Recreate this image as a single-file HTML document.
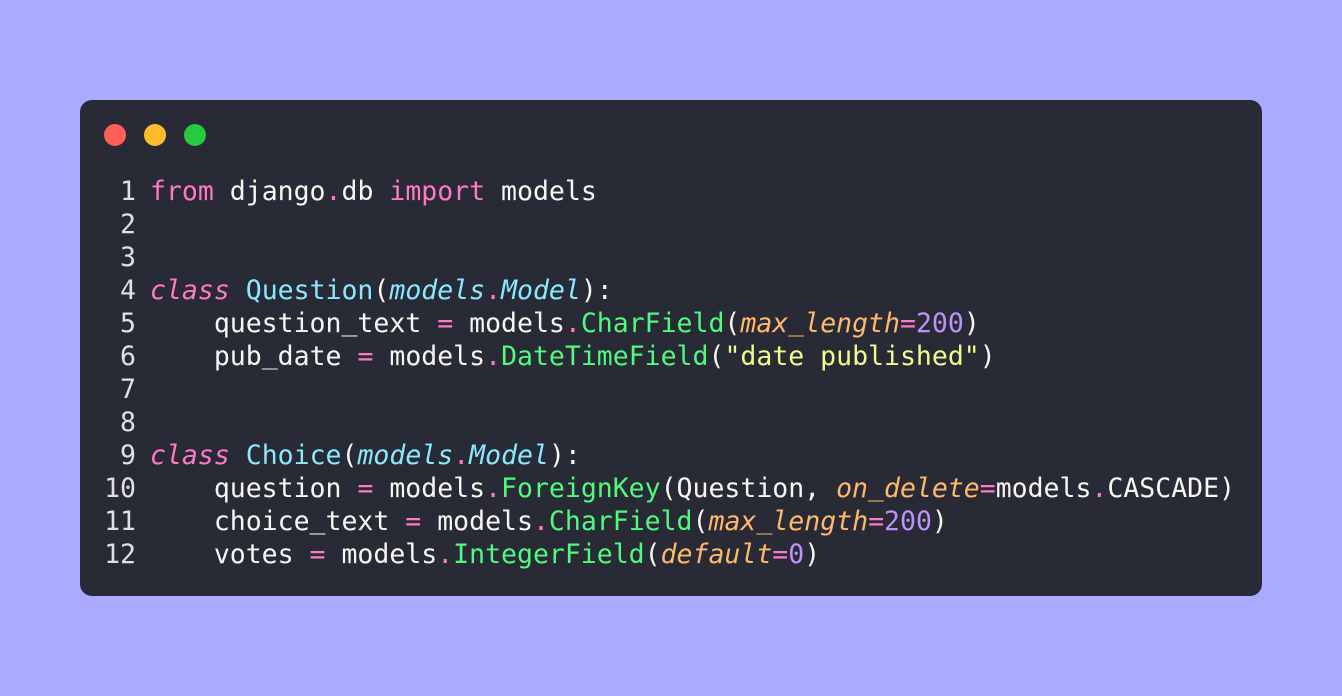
<!DOCTYPE html>
<html><head><meta charset="utf-8"><style>
html,body{margin:0;padding:0;}
body{width:1342px;height:696px;background:#aaaaff;position:relative;overflow:hidden;}
.card{position:absolute;left:80px;top:100px;width:1182px;height:496px;background:#282a36;border-radius:12px;}
.dot{position:absolute;top:24px;width:22px;height:22px;border-radius:50%;}
pre{position:absolute;left:0;top:75px;margin:0;font-family:"DejaVu Sans Mono","Liberation Mono",monospace;font-size:26.5px;line-height:33px;color:#f8f8f2;}
.ln{display:inline-block;width:56px;text-align:right;color:#e0e0e0;margin-right:14px;}
.k{color:#ff79c6}.c{color:#8be9fd}.i{color:#8be9fd;font-style:italic}.g{color:#50fa7b}.o{color:#ffb86c;font-style:italic}.p{color:#bd93f9}.y{color:#f1fa8c}.ki{color:#ff79c6;font-style:italic}
u{text-decoration:none;position:relative;top:-2px;display:inline-block;}
</style></head><body>
<div class="card">
<div class="dot" style="left:24px;background:#ff5f56"></div>
<div class="dot" style="left:64px;background:#ffbd2e"></div>
<div class="dot" style="left:104px;background:#27c93f"></div>
<pre><span class="ln">1</span><span class="k">from</span> django<span class="k">.</span>db <span class="k">import</span> models
<span class="ln">2</span>
<span class="ln">3</span>
<span class="ln">4</span><span class="ki">class</span> <span class="c">Question</span>(<span class="i">models</span><span class="k">.</span><span class="i">Model</span>):
<span class="ln">5</span>    question<u>_</u>text <span class="k">=</span> models<span class="k">.</span><span class="g">CharField</span>(<span class="o">max<u>_</u>length</span><span class="k">=</span><span class="p">200</span>)
<span class="ln">6</span>    pub<u>_</u>date <span class="k">=</span> models<span class="k">.</span><span class="g">DateTimeField</span>(<span class="y">"date published"</span>)
<span class="ln">7</span>
<span class="ln">8</span>
<span class="ln">9</span><span class="ki">class</span> <span class="c">Choice</span>(<span class="i">models</span><span class="k">.</span><span class="i">Model</span>):
<span class="ln">10</span>    question <span class="k">=</span> models<span class="k">.</span><span class="g">ForeignKey</span>(Question, <span class="o">on<u>_</u>delete</span><span class="k">=</span>models<span class="k">.</span>CASCADE)
<span class="ln">11</span>    choice<u>_</u>text <span class="k">=</span> models<span class="k">.</span><span class="g">CharField</span>(<span class="o">max<u>_</u>length</span><span class="k">=</span><span class="p">200</span>)
<span class="ln">12</span>    votes <span class="k">=</span> models<span class="k">.</span><span class="g">IntegerField</span>(<span class="o">default</span><span class="k">=</span><span class="p">0</span>)</pre>
</div>
</body></html>
